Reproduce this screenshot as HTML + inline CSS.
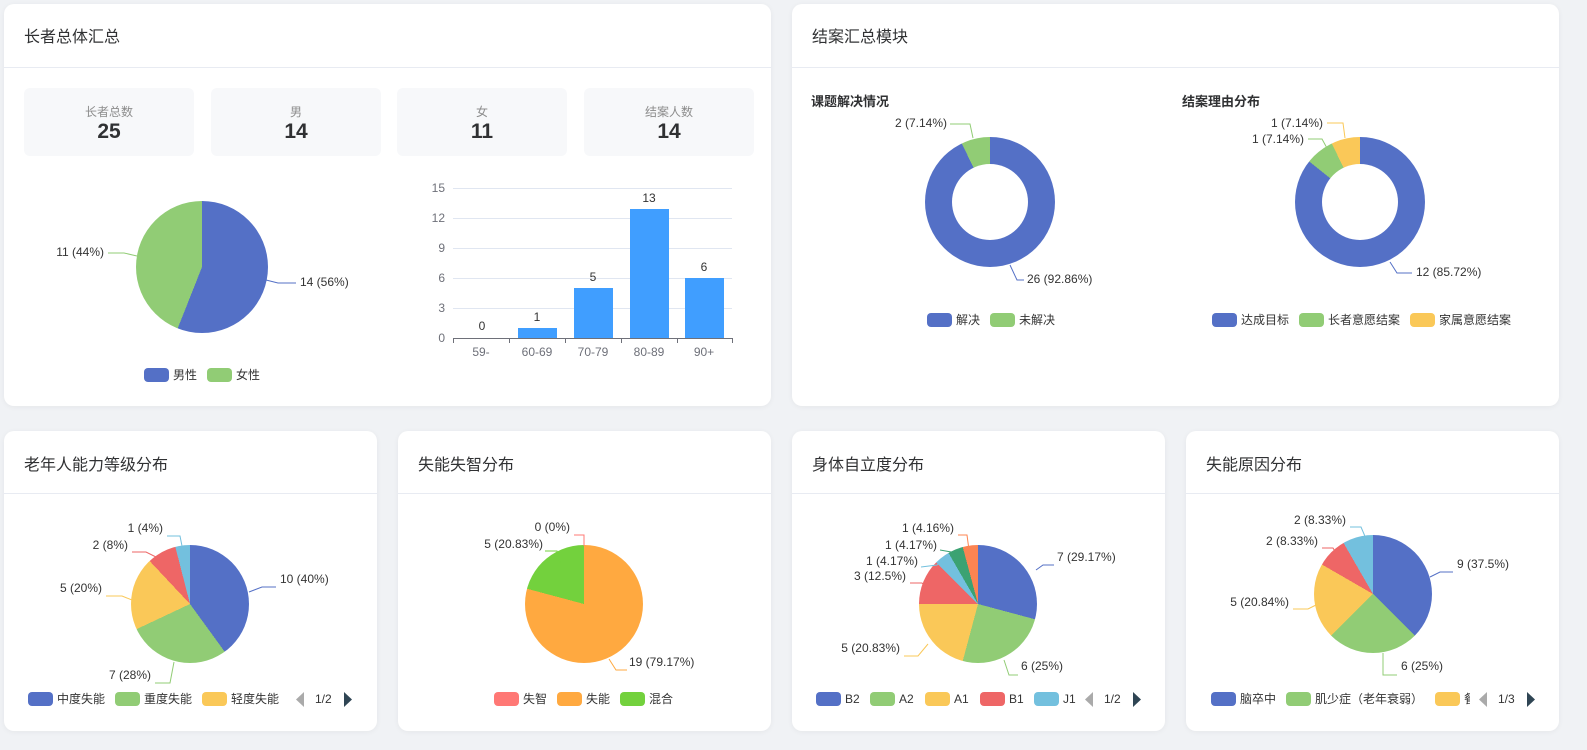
<!DOCTYPE html>
<html><head><meta charset="utf-8"><style>
*{margin:0;padding:0;box-sizing:border-box}
body{width:1587px;height:750px;background:#f0f2f5;position:relative;overflow:hidden;font-family:"Liberation Sans","Noto Sans CJK SC",sans-serif;color:#333}
.card{position:absolute;background:#fff;border-radius:10px;box-shadow:0 1px 6px rgba(0,0,0,.05)}
.hd{position:absolute;left:0;right:0;top:0;border-bottom:1px solid #e8ebf2;font-size:16px;color:#303133;padding-left:20px}
.st{position:absolute;top:84px;width:170px;height:68px;background:#f7f8fa;border-radius:6px;text-align:center}
.st .l{font-size:12px;color:#8c8c8c;margin-top:15px}
.st .v{font-size:21px;font-weight:bold;color:#303133;line-height:24px}
.pie{position:absolute;border-radius:50%}
.hole{position:absolute;border-radius:50%;background:#fff}
.sub{position:absolute;font-size:13px;font-weight:bold;color:#303133}
svg{position:absolute;left:0;top:0}
svg text{font-family:"Liberation Sans","Noto Sans CJK SC",sans-serif;font-size:12px;fill:#333}
</style></head><body>
<div class="card" style="left:4px;top:4px;width:767px;height:402px"><div class="hd" style="height:64px;line-height:68px">长者总体汇总</div>
<div class="st" style="left:20px"><div class="l">长者总数</div><div class="v">25</div></div>
<div class="st" style="left:207px"><div class="l">男</div><div class="v">14</div></div>
<div class="st" style="left:393px"><div class="l">女</div><div class="v">11</div></div>
<div class="st" style="left:580px"><div class="l">结案人数</div><div class="v">14</div></div>
</div>
<div class="card" style="left:792px;top:4px;width:767px;height:402px"><div class="hd" style="height:64px;line-height:68px">结案汇总模块</div>
<div class="sub" style="left:19px;top:87px">课题解决情况</div>
<div class="sub" style="left:390px;top:87px">结案理由分布</div>
</div>
<div class="card" style="left:4px;top:431px;width:373px;height:300px"><div class="hd" style="height:63px;line-height:70px">老年人能力等级分布</div></div>
<div class="card" style="left:398px;top:431px;width:373px;height:300px"><div class="hd" style="height:63px;line-height:70px">失能失智分布</div></div>
<div class="card" style="left:792px;top:431px;width:373px;height:300px"><div class="hd" style="height:63px;line-height:70px">身体自立度分布</div></div>
<div class="card" style="left:1186px;top:431px;width:373px;height:300px"><div class="hd" style="height:63px;line-height:70px">失能原因分布</div></div>

<div class="pie" style="left:136px;top:201px;width:132px;height:132px;background:conic-gradient(#5470c6 0 201.6deg,#91cc75 0 360deg)"></div>
<div class="pie" style="left:925px;top:137px;width:130px;height:130px;background:conic-gradient(#5470c6 0 334.3deg,#91cc75 0 360deg)"></div>
<div class="hole" style="left:952px;top:164px;width:76px;height:76px"></div>
<div class="pie" style="left:1295px;top:137px;width:130px;height:130px;background:conic-gradient(#5470c6 0 308.6deg,#91cc75 0 334.3deg,#fac858 0 360deg)"></div>
<div class="hole" style="left:1322px;top:164px;width:76px;height:76px"></div>
<div class="pie" style="left:131px;top:545px;width:118px;height:118px;background:conic-gradient(#5470c6 0 144deg,#91cc75 0 244.8deg,#fac858 0 316.8deg,#ee6666 0 345.6deg,#73c0de 0 360deg)"></div>
<div class="pie" style="left:525px;top:545px;width:118px;height:118px;background:conic-gradient(#ffa940 0 285deg,#73d13d 0 360deg)"></div>
<div class="pie" style="left:919px;top:545px;width:118px;height:118px;background:conic-gradient(#5470c6 0 105deg,#91cc75 0 195deg,#fac858 0 270deg,#ee6666 0 315deg,#73c0de 0 330deg,#3ba272 0 345deg,#fc8452 0 360deg)"></div>
<div class="pie" style="left:1314px;top:535px;width:118px;height:118px;background:conic-gradient(#5470c6 0 135deg,#91cc75 0 225deg,#fac858 0 300deg,#ee6666 0 330deg,#73c0de 0 360deg)"></div>

<svg width="1587" height="750">
<g stroke="#e0e6f1" stroke-width="1"><line x1="453" y1="188.5" x2="732" y2="188.5"/><line x1="453" y1="218.5" x2="732" y2="218.5"/><line x1="453" y1="248.5" x2="732" y2="248.5"/><line x1="453" y1="278.5" x2="732" y2="278.5"/><line x1="453" y1="308.5" x2="732" y2="308.5"/></g>
<g stroke="#6e7079"><line x1="453" y1="338.5" x2="732" y2="338.5"/><line x1="453.5" y1="338" x2="453.5" y2="343"/><line x1="509.5" y1="338" x2="509.5" y2="343"/><line x1="565.5" y1="338" x2="565.5" y2="343"/><line x1="621.5" y1="338" x2="621.5" y2="343"/><line x1="677.5" y1="338" x2="677.5" y2="343"/><line x1="732.5" y1="338" x2="732.5" y2="343"/></g>
<g fill="#409eff"><rect x="518" y="328" width="39" height="10"/><rect x="574" y="288" width="39" height="50"/><rect x="630" y="209" width="39" height="129"/><rect x="685" y="278" width="39" height="60"/></g>
<g text-anchor="end"><text x="445" y="192" style="fill:#6e7079">15</text><text x="445" y="222" style="fill:#6e7079">12</text><text x="445" y="252" style="fill:#6e7079">9</text><text x="445" y="282" style="fill:#6e7079">6</text><text x="445" y="312" style="fill:#6e7079">3</text><text x="445" y="342" style="fill:#6e7079">0</text></g>
<g text-anchor="middle"><text x="481" y="356" style="fill:#6e7079">59-</text><text x="537" y="356" style="fill:#6e7079">60-69</text><text x="593" y="356" style="fill:#6e7079">70-79</text><text x="649" y="356" style="fill:#6e7079">80-89</text><text x="704" y="356" style="fill:#6e7079">90+</text>
<text x="482" y="330">0</text><text x="537" y="321">1</text><text x="593" y="281">5</text><text x="649" y="202">13</text><text x="704" y="271">6</text></g>
<polyline points="266,280 278,283 296,283" fill="none" stroke="#5470c6"/><text x="300" y="286">14 (56%)</text>
<polyline points="108,253 124,253 137,256" fill="none" stroke="#91cc75"/><text x="104" y="256" text-anchor="end">11 (44%)</text>
<polyline points="950,124 970,124 973,138" fill="none" stroke="#91cc75"/><text x="947" y="127" text-anchor="end">2 (7.14%)</text>
<polyline points="1010,265 1017,280 1024,280" fill="none" stroke="#5470c6"/><text x="1027" y="283">26 (92.86%)</text>
<polyline points="1327,123 1343,123 1345,138" fill="none" stroke="#fac858"/><text x="1323" y="127" text-anchor="end">1 (7.14%)</text>
<polyline points="1308,139 1322,139 1328,150" fill="none" stroke="#91cc75"/><text x="1304" y="143" text-anchor="end">1 (7.14%)</text>
<polyline points="1390,262 1397,273 1412,273" fill="none" stroke="#5470c6"/><text x="1416" y="276">12 (85.72%)</text>
<polyline points="249,592 262,587 276,587" fill="none" stroke="#5470c6"/><text x="280" y="583">10 (40%)</text>
<polyline points="167,536 180,536 182,546" fill="none" stroke="#73c0de"/><text x="163" y="532" text-anchor="end">1 (4%)</text>
<polyline points="132,552 146,552 160,559" fill="none" stroke="#ee6666"/><text x="128" y="549" text-anchor="end">2 (8%)</text>
<polyline points="106,596 122,596 132,600" fill="none" stroke="#fac858"/><text x="102" y="592" text-anchor="end">5 (20%)</text>
<polyline points="155,683 170,683 174,662" fill="none" stroke="#91cc75"/><text x="151" y="679" text-anchor="end">7 (28%)</text>
<polyline points="574,535 584,535 584,546" fill="none" stroke="#ff7875"/><text x="570" y="531" text-anchor="end">0 (0%)</text>
<polyline points="545,551 557,551 560,563" fill="none" stroke="#73d13d"/><text x="543" y="548" text-anchor="end">5 (20.83%)</text>
<polyline points="609,659 616,670 627,670" fill="none" stroke="#ffa940"/><text x="629" y="666">19 (79.17%)</text>
<polyline points="1036,570 1043,565 1054,565" fill="none" stroke="#5470c6"/><text x="1057" y="561">7 (29.17%)</text>
<polyline points="958,535 967,535 969,550" fill="none" stroke="#fc8452"/><text x="954" y="532" text-anchor="end">1 (4.16%)</text>
<polyline points="940,550 957,553" fill="none" stroke="#3ba272"/><text x="937" y="549" text-anchor="end">1 (4.17%)</text>
<polyline points="921,567 937,565 946,558" fill="none" stroke="#73c0de"/><text x="918" y="565" text-anchor="end">1 (4.17%)</text>
<polyline points="910,583 922,583 928,590" fill="none" stroke="#ee6666"/><text x="906" y="580" text-anchor="end">3 (12.5%)</text>
<polyline points="904,656 918,656 928,644" fill="none" stroke="#fac858"/><text x="900" y="652" text-anchor="end">5 (20.83%)</text>
<polyline points="1004,660 1009,675 1018,675" fill="none" stroke="#91cc75"/><text x="1021" y="670">6 (25%)</text>
<polyline points="1430,577 1440,572 1453,572" fill="none" stroke="#5470c6"/><text x="1457" y="568">9 (37.5%)</text>
<polyline points="1350,527 1361,527 1367,541" fill="none" stroke="#73c0de"/><text x="1346" y="524" text-anchor="end">2 (8.33%)</text>
<polyline points="1322,548 1333,548 1340,560" fill="none" stroke="#ee6666"/><text x="1318" y="545" text-anchor="end">2 (8.33%)</text>
<polyline points="1293,609 1308,609 1318,604" fill="none" stroke="#fac858"/><text x="1289" y="606" text-anchor="end">5 (20.84%)</text>
<polyline points="1383,653 1383,675 1397,675" fill="none" stroke="#91cc75"/><text x="1401" y="670">6 (25%)</text>
<g>
<rect x="144" y="368" width="25" height="14" rx="4" fill="#5470c6"/><text x="173" y="379">男性</text>
<rect x="207" y="368" width="25" height="14" rx="4" fill="#91cc75"/><text x="236" y="379">女性</text>
<rect x="927" y="313" width="25" height="14" rx="4" fill="#5470c6"/><text x="956" y="324">解决</text>
<rect x="990" y="313" width="25" height="14" rx="4" fill="#91cc75"/><text x="1019" y="324">未解决</text>
<rect x="1212" y="313" width="25" height="14" rx="4" fill="#5470c6"/><text x="1241" y="324">达成目标</text>
<rect x="1299" y="313" width="25" height="14" rx="4" fill="#91cc75"/><text x="1328" y="324">长者意愿结案</text>
<rect x="1410" y="313" width="25" height="14" rx="4" fill="#fac858"/><text x="1439" y="324">家属意愿结案</text>
<rect x="28" y="692" width="25" height="14" rx="4" fill="#5470c6"/><text x="57" y="703">中度失能</text>
<rect x="115" y="692" width="25" height="14" rx="4" fill="#91cc75"/><text x="144" y="703">重度失能</text>
<rect x="202" y="692" width="25" height="14" rx="4" fill="#fac858"/><text x="231" y="703">轻度失能</text>
<polygon points="304,692 304,707 296,699.5" fill="#aaa"/><text x="315" y="703">1/2</text><polygon points="344,692 344,707 352,699.5" fill="#2f4554"/>
<rect x="494" y="692" width="25" height="14" rx="4" fill="#ff7875"/><text x="523" y="703">失智</text>
<rect x="557" y="692" width="25" height="14" rx="4" fill="#ffa940"/><text x="586" y="703">失能</text>
<rect x="620" y="692" width="25" height="14" rx="4" fill="#73d13d"/><text x="649" y="703">混合</text>
<rect x="816" y="692" width="25" height="14" rx="4" fill="#5470c6"/><text x="845" y="703">B2</text>
<rect x="870" y="692" width="25" height="14" rx="4" fill="#91cc75"/><text x="899" y="703">A2</text>
<rect x="925" y="692" width="25" height="14" rx="4" fill="#fac858"/><text x="954" y="703">A1</text>
<rect x="980" y="692" width="25" height="14" rx="4" fill="#ee6666"/><text x="1009" y="703">B1</text>
<rect x="1034" y="692" width="25" height="14" rx="4" fill="#73c0de"/><text x="1063" y="703">J1</text>
<polygon points="1093,692 1093,707 1085,699.5" fill="#aaa"/><text x="1104" y="703">1/2</text><polygon points="1133,692 1133,707 1141,699.5" fill="#2f4554"/>
<rect x="1211" y="692" width="25" height="14" rx="4" fill="#5470c6"/><text x="1240" y="703">脑卒中</text>
<rect x="1286" y="692" width="25" height="14" rx="4" fill="#91cc75"/><text x="1315" y="703">肌少症（老年衰弱）</text>
<rect x="1435" y="692" width="25" height="14" rx="4" fill="#fac858"/><text x="1464" y="703">餐</text>
<rect x="1470" y="688" width="10" height="22" fill="#fff"/>
<polygon points="1487,692 1487,707 1479,699.5" fill="#aaa"/><text x="1498" y="703">1/3</text><polygon points="1527,692 1527,707 1535,699.5" fill="#2f4554"/>
</g>
</svg>
</body></html>
